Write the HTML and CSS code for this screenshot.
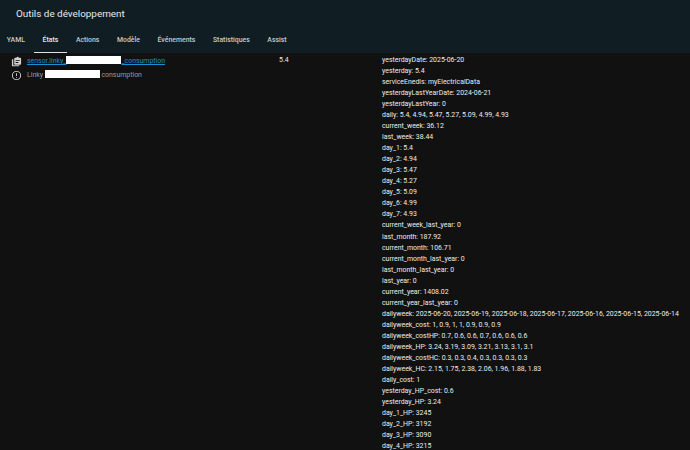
FILE: index.html
```html
<!DOCTYPE html>
<html lang="fr">
<head>
  <meta charset="UTF-8">
  <title>Outils de développement</title>
  <link rel="stylesheet" href="styles.css">
</head>
<body>

<header class="topbar">
  <div class="toolbar">Outils de développement</div>
  <nav class="tabs">
    <a class="tab">YAML</a>
    <a class="tab active">États</a>
    <a class="tab">Actions</a>
    <a class="tab">Modèle</a>
    <a class="tab">Événements</a>
    <a class="tab">Statistiques</a>
    <a class="tab">Assist</a>
  </nav>
</header>

<main class="states">
  <div class="col-entity">
    <div class="entity-row">
      <svg class="icon" viewBox="0 0 24 24"><path fill="#d0d0d0" d="M9 4h3a2.5 2.5 0 0 1 5 0h3a2 2 0 0 1 2 2v11a2 2 0 0 1-2 2H9a2 2 0 0 1-2-2V6a2 2 0 0 1 2-2zm1 5v2h9V9zm0 4v2h6v-2zM2 7h3v13h13v2.500H4a2 2 0 0 1-2-2z"/></svg>
      <a class="entity-id">sensor.linky_<span class="mask mask-id"></span>_consumption</a>
    </div>
    <div class="entity-row">
      <svg class="icon" viewBox="0 0 24 24"><path fill="#d8d8d8" d="M12 2a10 10 0 1 1 0 20 10 10 0 0 1 0-20zm0 2a8 8 0 1 0 0 16 8 8 0 0 0 0-16zm-1 3h2v6h-2zm0 8h2v2h-2z"/></svg>
      <span class="entity-name">Linky <span class="mask mask-name"></span> consumption</span>
    </div>
  </div>
  <div class="col-state">5.4</div>
  <div class="col-attrs">
    <div>yesterdayDate: 2025-06-20</div>
    <div>yesterday: 5.4</div>
    <div>serviceEnedis: myElectricalData</div>
    <div>yesterdayLastYearDate: 2024-06-21</div>
    <div>yesterdayLastYear: 0</div>
    <div>daily: 5.4, 4.94, 5.47, 5.27, 5.09, 4.99, 4.93</div>
    <div>current_week: 36.12</div>
    <div>last_week: 38.44</div>
    <div>day_1: 5.4</div>
    <div>day_2: 4.94</div>
    <div>day_3: 5.47</div>
    <div>day_4: 5.27</div>
    <div>day_5: 5.09</div>
    <div>day_6: 4.99</div>
    <div>day_7: 4.93</div>
    <div>current_week_last_year: 0</div>
    <div>last_month: 187.92</div>
    <div>current_month: 106.71</div>
    <div>current_month_last_year: 0</div>
    <div>last_month_last_year: 0</div>
    <div>last_year: 0</div>
    <div>current_year: 1408.02</div>
    <div>current_year_last_year: 0</div>
    <div>dailyweek: 2025-06-20, 2025-06-19, 2025-06-18, 2025-06-17, 2025-06-16, 2025-06-15, 2025-06-14</div>
    <div>dailyweek_cost: 1, 0.9, 1, 1, 0.9, 0.9, 0.9</div>
    <div>dailyweek_costHP: 0.7, 0.6, 0.6, 0.7, 0.6, 0.6, 0.6</div>
    <div>dailyweek_HP: 3.24, 3.19, 3.09, 3.21, 3.13, 3.1, 3.1</div>
    <div>dailyweek_costHC: 0.3, 0.3, 0.4, 0.3, 0.3, 0.3, 0.3</div>
    <div>dailyweek_HC: 2.15, 1.75, 2.38, 2.06, 1.96, 1.88, 1.83</div>
    <div>daily_cost: 1</div>
    <div>yesterday_HP_cost: 0.6</div>
    <div>yesterday_HP: 3.24</div>
    <div>day_1_HP: 3245</div>
    <div>day_2_HP: 3192</div>
    <div>day_3_HP: 3090</div>
    <div>day_4_HP: 3215</div>
  </div>
</main>

</body>
</html>
```

FILE: styles.css
```css
html, body { height: 100%; }
body { margin: 0; background-color: #111111; color: #ececec; font-family: Roboto, "Liberation Sans", sans-serif; overflow: hidden; }
.topbar { background-color: #101e24; height: 53px; }
.toolbar { height: 27px; padding-left: 16px; padding-top: 1px; box-sizing: border-box; font-size: 9.9px; line-height: 26px; color: #e8e8e8; }
.tabs { display: flex; height: 26px; margin-left: -2px; }
.tab { position: relative; padding: 0 8.8px; font-size: 6.9px; font-weight: 500; line-height: 27px; color: #c4cacc; }
.tab.active { color: #e8e8e8; }
.tab.active::after { content: ""; position: absolute; left: 0; right: 0; bottom: 0; height: 1px; background-color: #e1e1e1; }
.states { display: flex; padding-top: 2px; font-size: 6.93px; line-height: 11.03px; }
.col-entity { width: 279px; flex: none; }
.col-state { width: 103px; flex: none; }
.col-attrs { flex: none; white-space: nowrap; }
.entity-row { display: flex; align-items: center; height: 13.5px; padding-left: 11px; }
.icon { width: 11px; height: 11px; margin-right: 5px; flex: none; }
.entity-id { color: #1b8fd0; text-decoration: underline; white-space: nowrap; }
.entity-name { color: #9b9b9b; white-space: nowrap; }
.mask { display: inline-block; height: 8px; background-color: #ffffff; vertical-align: -1px; }
.mask-id { width: 55px; }
.mask-name { width: 55px; }
```
